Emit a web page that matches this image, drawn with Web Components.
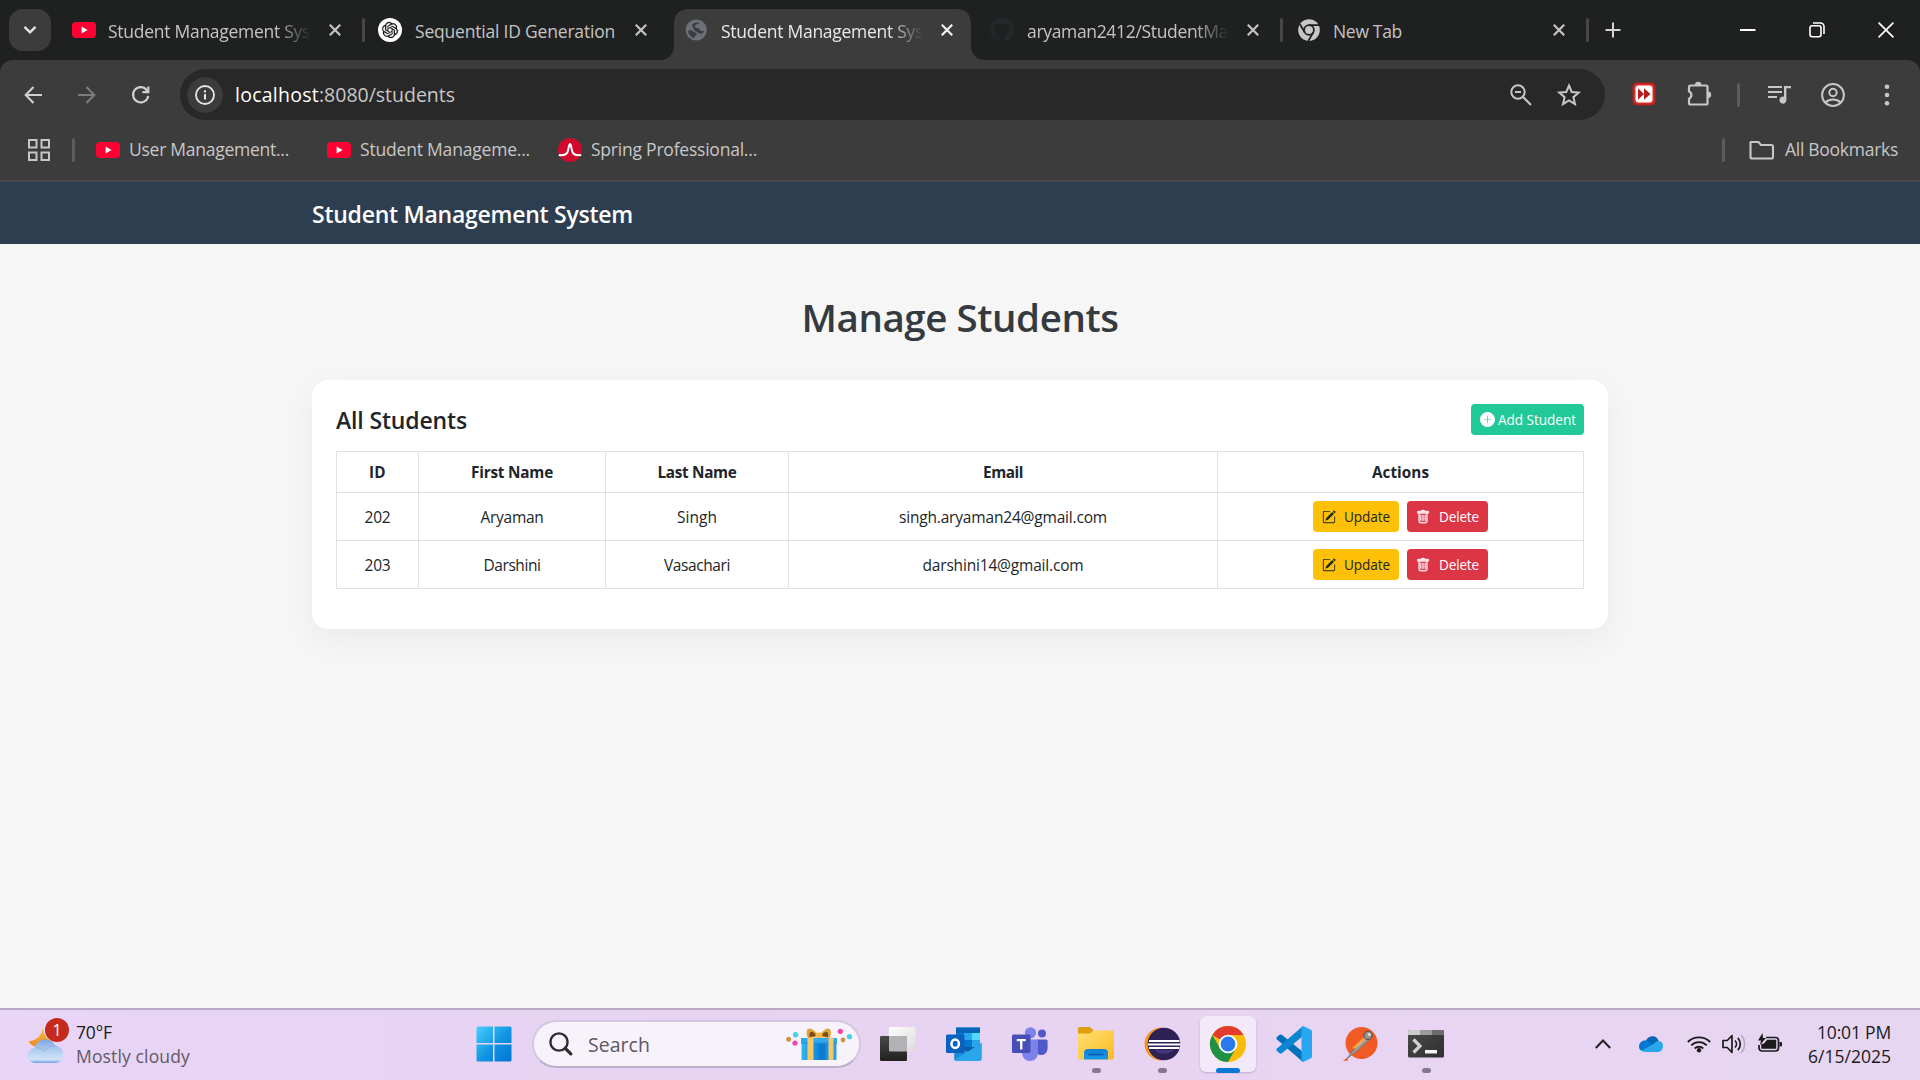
<!DOCTYPE html>
<html lang="en">
<head>
<meta charset="utf-8">
<title>Student Management System</title>
<style>
html,body{margin:0;padding:0}
body{width:1920px;height:1080px;overflow:hidden;background:#f6f6f6;font-family:"Open Sans","Noto Sans",sans-serif}
</style>
</head>
<body>
<desktop-screen></desktop-screen>
<script>
const YT='<rect width="24" height="16" rx="4" fill="#ff0033"/><path d="M9.6 4.6v6.8l6-3.4z" fill="#fff"/>';
const CLOSE='<path d="M.8.8l10.400 10.400M11.200.8L.8 11.200" stroke="currentColor" stroke-width="2.200"/>';
const ICONS={
youtube:[24,16,YT],
close:[12,12,CLOSE],
chevron:[14,10,'<path d="M1.5 1.8L7 7.3l5.5-5.5" fill="none" stroke="#e3e3e3" stroke-width="2.4"/>'],
openai:[24,24,'<circle cx="12" cy="12" r="12" fill="#fff"/><g transform="translate(4 4) scale(.667)"><path fill="#111" stroke="#111" stroke-width=".3" d="M22.2819 9.8211a5.9847 5.9847 0 0 0-.5157-4.9108 6.0462 6.0462 0 0 0-6.5098-2.9A6.0651 6.0651 0 0 0 4.9807 4.1818a5.9847 5.9847 0 0 0-3.9977 2.9 6.0462 6.0462 0 0 0 .7427 7.0966 5.98 5.98 0 0 0 .511 4.9107 6.051 6.051 0 0 0 6.5146 2.9001A5.9847 5.9847 0 0 0 13.2599 24a6.0557 6.0557 0 0 0 5.7718-4.2058 5.9894 5.9894 0 0 0 3.9977-2.9001 6.0557 6.0557 0 0 0-.7475-7.0729zm-9.022 12.6081a4.4755 4.4755 0 0 1-2.8764-1.0408l.1419-.0804 4.7783-2.7582a.7948.7948 0 0 0 .3927-.6813v-6.7369l2.02 1.1686a.071.071 0 0 1 .038.052v5.5826a4.504 4.504 0 0 1-4.4945 4.4944zm-9.6607-4.1254a4.4708 4.4708 0 0 1-.5346-3.0137l.142.0852 4.783 2.7582a.7712.7712 0 0 0 .7806 0l5.8428-3.3685v2.3324a.0804.0804 0 0 1-.0332.0615L9.74 19.9502a4.4992 4.4992 0 0 1-6.1408-1.6464zM2.3408 7.8956a4.485 4.485 0 0 1 2.3655-1.9728V11.6a.7664.7664 0 0 0 .3879.6765l5.8144 3.3543-2.0201 1.1685a.0757.0757 0 0 1-.071 0l-4.8303-2.7865A4.504 4.504 0 0 1 2.3408 7.872zm16.5963 3.8558L13.1038 8.364 15.1192 7.2a.0757.0757 0 0 1 .071 0l4.8303 2.7913a4.4944 4.4944 0 0 1-.6765 8.1042v-5.6772a.79.79 0 0 0-.407-.667zm2.0107-3.0231l-.142-.0852-4.7735-2.7818a.7759.7759 0 0 0-.7854 0L9.409 9.2297V6.8974a.0662.0662 0 0 1 .0284-.0615l4.8303-2.7866a4.4992 4.4992 0 0 1 6.6802 4.66zM8.3065 12.863l-2.02-1.1638a.0804.0804 0 0 1-.038-.0567V6.0742a4.4992 4.4992 0 0 1 7.3757-3.4537l-.142.0805L8.704 5.459a.7948.7948 0 0 0-.3927.6813zm1.0976-2.3654l2.602-1.4998 2.6069 1.4998v2.9994l-2.5974 1.4997-2.6067-1.4997Z"/></g>'],
globe:[24,24,'<circle cx="12.300" cy="12" r="10.600" fill="#6c7078"/><path d="M15.500 4.800c-1.200 1.600-4.200 1.400-4.600 3.400-.2 1.600 1.600 1.500 3 1.900 1.900.6 1.600 2.700 3.400 3h3.200c-.3 1.600-2.200 2.400-4 2.600-2-.2-2.800-1.700-4.500-2.300-1.700-.5-2.500-1.800-2.500-3.600-.9-.6-1.500-1.200-1.500-2.500C8.800 5.100 12 4 15.500 4.800zM4 12.500h3.600c1.400.2 1.500 1.400 2.900 1.800 1.300.4 2.400 1 2.200 2.300-.2 1.200-1.800 1-2 2.300l-.2 1.300C7 19.200 4.300 16.500 4 12.500z" fill="#3c3c3c"/>'],
github:[24,24,'<path transform="scale(1.5)" fill="#22282c" d="M8 0C3.580 0 0 3.580 0 8c0 3.540 2.290 6.530 5.470 7.590.4.07.55-.17.55-.38 0-.19-.01-.82-.01-1.490-2.010.37-2.530-.49-2.690-.94-.09-.23-.48-.94-.82-1.130-.28-.15-.68-.52-.01-.53.63-.01 1.080.58 1.230.82.72 1.210 1.870.87 2.330.66.07-.52.28-.87.51-1.070-1.780-.2-3.640-.89-3.640-3.950 0-.87.31-1.590.82-2.150-.08-.2-.36-1.020.08-2.120 0 0 .67-.21 2.200.82.64-.18 1.320-.27 2-.27s1.360.09 2 .27c1.530-1.040 2.200-.82 2.200-.82.44 1.100.16 1.920.08 2.120.51.56.82 1.270.82 2.150 0 3.070-1.870 3.750-3.650 3.950.29.25.54.73.54 1.480 0 1.070-.01 1.930-.01 2.200 0 .21.15.46.55.38A8.010 8.010 0 0 0 16 8c0-4.420-3.580-8-8-8"/>'],
chromegrey:[24,24,'<circle cx="13" cy="12" r="10.800" fill="#c7c7c7"/><circle cx="13" cy="12" r="4.900" fill="none" stroke="#1f2120" stroke-width="1.800"/><path d="M13 7.100h10M8.800 14.500L3.900 6.100M17.200 14.500l-5 8.600" stroke="#1f2120" stroke-width="1.800"/>'],
plus:[16,16,'<path d="M8 .5v15M.5 8h15" stroke="#d5d5d5" stroke-width="2"/>'],
min:[16,2,'<rect width="15.500" height="2" fill="#fff"/>'],
restore:[16,16,'<rect x="1" y="3.800" width="11" height="11" rx="2.200" fill="none" stroke="#fff" stroke-width="1.600"/><path d="M4 1h7.500A3.500 3.500 0 0 1 15 4.500V12" fill="none" stroke="#fff" stroke-width="1.600"/>'],
winclose:[16,16,'<path d="M.6.6l14.800 14.800M15.400.6L.6 15.400" stroke="#fff" stroke-width="1.700"/>'],
back:[18,18,'<path d="M9.500 1L1.700 9l7.800 8M1.800 9H18" fill="none" stroke="currentColor" stroke-width="2.100"/>'],
fwd:[18,18,'<path d="M8.500 1l7.800 8-7.800 8M16.200 9H0" fill="none" stroke="currentColor" stroke-width="2.100"/>'],
reload:[18,18,'<path d="M16.200 9.800A7.600 7.600 0 1 1 14.600 4L16 5.600" fill="none" stroke="#d0d0d0" stroke-width="2.100"/><path d="M17.400.4V7.200h-7V5.100h4.900V.4z" fill="#d0d0d0"/>'],
info:[36,36,'<circle cx="18" cy="18" r="17.800" fill="#3c3c3c"/><circle cx="18" cy="18" r="9" fill="none" stroke="#e3e3e3" stroke-width="1.900"/><path d="M17 17h2v5.500h-2zM17 13.300h2v2.100h-2z" fill="#e3e3e3"/>'],
zoomout:[22,22,'<circle cx="8" cy="8" r="6.700" fill="none" stroke="#c7c7c7" stroke-width="2"/><path d="M5 8h6M13 13l8 8" stroke="#c7c7c7" stroke-width="2.200"/>'],
star:[24,24,'<path d="M12 2.500l2.700 6.500 7 .6-5.300 4.600 1.600 6.900-6-3.700-6 3.700 1.600-6.900-5.300-4.600 7-.6z" fill="none" stroke="#c7c7c7" stroke-width="2"/>'],
ext:[24,24,'<rect x=".5" y=".5" width="23" height="23" rx="4.500" fill="#b5201c"/><rect x="1.800" y="1.800" width="20.400" height="20.400" rx="3.800" fill="#d62c27"/><rect x="3.500" y="3.500" width="17" height="17" rx="3" fill="#fff"/><path d="M6 6.300l6 5.700-6 5.700zM12 6.300l6.500 5.700-6.500 5.700z" fill="#b3201c"/>'],
puzzle:[26,26,'<path d="M3.500 5.500h15.500a1.500 1.500 0 0 1 1.500 1.500V23a1.500 1.500 0 0 1-1.500 1.500H3.500A1.500 1.500 0 0 1 2 23v-4.300a3.900 3.900 0 0 0 0-7.200V7a1.500 1.500 0 0 1 1.500-1.500z" fill="none" stroke="#c7c7c7" stroke-width="2.200" stroke-linejoin="round"/><path d="M8 5a3.200 3.200 0 0 1 6.400 0zM21 11.600a3.200 3.200 0 0 1 0 6.400z" fill="#c7c7c7"/>'],
media:[24,18,'<path d="M0 1h14M0 6h14M0 11h9" stroke="#c7c7c7" stroke-width="2"/><path d="M16 0h7v2.300h-4.600V14a3.500 3.500 0 1 1-2.400-3.200z" fill="#c7c7c7"/>'],
profile:[24,24,'<circle cx="12" cy="12" r="10.900" fill="none" stroke="#c7c7c7" stroke-width="2"/><circle cx="12" cy="9.500" r="3.700" fill="none" stroke="#c7c7c7" stroke-width="2"/><path d="M4.500 19.500c2-2.200 4.600-3 7.500-3s5.500.8 7.500 3" fill="none" stroke="#c7c7c7" stroke-width="2"/>'],
dots:[6,22,'<circle cx="3" cy="2.800" r="2.300" fill="#c7c7c7"/><circle cx="3" cy="11" r="2.300" fill="#c7c7c7"/><circle cx="3" cy="19.200" r="2.300" fill="#c7c7c7"/>'],
grid:[22,22,'<g fill="none" stroke="#c7c7c7" stroke-width="2"><path d="M1 1h7.500v7.500H1zM13.500 1H21v7.500h-7.500zM1 13.500h7.500V21H1zM13.500 13.500H21V21h-7.500z"/></g>'],
spring:[24,24,'<circle cx="12" cy="12" r="12" fill="#cf0a2c"/><path d="M.8 17c4 .5 7 .2 8.500-2.500C10.800 12 10.600 6 12 6s1.200 6 2.700 8.500C16.200 17.200 19 17.500 23.200 17" fill="none" stroke="#fff" stroke-width="2"/>'],
folder:[26,20,'<path d="M2 2h7.500l2.500 3h10.500a1.500 1.500 0 0 1 1.500 1.500V17a1.500 1.500 0 0 1-1.500 1.500H3A1.500 1.500 0 0 1 1.500 17V2.500z" fill="none" stroke="#c7c7c7" stroke-width="2.100"/>'],
pencil:[16,16,'<path fill="currentColor" d="M15.502 1.940a.5.5 0 0 1 0 .706L14.459 3.690l-2-2L13.502.646a.5.5 0 0 1 .707 0l1.293 1.293zm-1.750 2.456-2-2L4.939 9.210a.5.5 0 0 0-.121.196l-.805 2.414a.25.25 0 0 0 .316.316l2.414-.805a.5.5 0 0 0 .196-.12l6.813-6.814z"/><path fill="currentColor" d="M1 13.500A1.500 1.500 0 0 0 2.500 15h11a1.500 1.500 0 0 0 1.500-1.500v-6a.5.5 0 0 0-1 0v6a.5.5 0 0 1-.5.5h-11a.5.5 0 0 1-.5-.5v-11a.5.5 0 0 1 .5-.5H9a.5.5 0 0 0 0-1H2.500A1.500 1.500 0 0 0 1 2.500z"/>'],
trash:[16,16,'<g fill="currentColor" stroke="currentColor" stroke-width=".35"><path d="M5.500 5.500A.5.5 0 0 1 6 6v6a.5.5 0 0 1-1 0V6a.5.5 0 0 1 .5-.5m2.500 0a.5.5 0 0 1 .5.5v6a.5.5 0 0 1-1 0V6a.5.5 0 0 1 .5-.5m3 .5a.5.5 0 0 0-1 0v6a.5.5 0 0 0 1 0z"/><path d="M14.500 3a1 1 0 0 1-1 1H13v9a2 2 0 0 1-2 2H5a2 2 0 0 1-2-2V4h-.5a1 1 0 0 1-1-1V2a1 1 0 0 1 1-1H6a1 1 0 0 1 1-1h2a1 1 0 0 1 1 1h3.500a1 1 0 0 1 1 1zM4.118 4 4 4.059V13a1 1 0 0 0 1 1h6a1 1 0 0 0 1-1V4.059L11.882 4zM2.500 3h11V2h-11z"/></g><path d="M2 1.800h12v1.500H2z" fill="currentColor" opacity=".75"/>'],
pluscircle:[16,16,'<path fill="currentColor" d="M16 8A8 8 0 1 1 0 8a8 8 0 0 1 16 0M8.350 4.500a.35.5 0 0 0-.7 0v3.150h-3.150a.5.35 0 0 0 0 .7h3.150v3.150a.35.5 0 0 0 .7 0v-3.150h3.150a.5.35 0 0 0 0-.7h-3.150z"/>'],
weather:[37,36,'<defs><linearGradient id="m" x1="0" y1="0" x2="0" y2="1"><stop offset="0" stop-color="#f7c13a"/><stop offset="1" stop-color="#ee8a1d"/></linearGradient><linearGradient id="c" x1="0" y1="0" x2="0" y2="1"><stop offset="0" stop-color="#7fa6e6"/><stop offset=".5" stop-color="#b4d0f1"/><stop offset=".85" stop-color="#cfe3f8"/><stop offset="1" stop-color="#6f9fe8"/></linearGradient></defs><path d="M15 0c-1.500 8.500-5 13-14.500 14.500C3 19 9 21 14 19l9-5c-5-2.500-8-7.500-8-14z" fill="url(#m)"/><path d="M7.500 36a7.500 7.500 0 0 1-.8-15C8 15.500 12 12.500 17 12.500c5 0 8.700 2.500 10.200 6.300A8.700 8.700 0 0 1 28.300 36z" fill="url(#c)"/><path d="M7 21c4.500-.8 7.500.8 9.500 3.300 2-4.500 6-6.500 11.500-5.500" fill="none" stroke="#86ace6" stroke-width="1" opacity=".7"/>'],
windows:[36,36,'<defs><linearGradient id="w" x1="0" y1="0" x2="1" y2="1"><stop offset="0" stop-color="#46d0fb"/><stop offset=".55" stop-color="#1193e2"/><stop offset="1" stop-color="#0074d1"/></linearGradient></defs><path fill="url(#w)" d="M2 .5h15v16.500H.5V2A1.500 1.500 0 0 1 2 .5zM18.500.5h15.500A1.500 1.500 0 0 1 35.500 2v15h-17zM.5 18.500H17v17H2A1.500 1.500 0 0 1 .5 34zM18.500 18.500h17V34a1.500 1.500 0 0 1-1.500 1.500H18.500z"/>'],
search:[24,24,'<circle cx="10" cy="10" r="8.600" fill="none" stroke="#2d2a30" stroke-width="2.400"/><path d="M16.300 16.300l5.500 5.500" stroke="#2d2a30" stroke-width="3.200" stroke-linecap="round"/>'],
gift:[66,34,'<defs><linearGradient id="g" x1="0" y1="0" x2="1" y2="0"><stop offset="0" stop-color="#35b4ee"/><stop offset=".5" stop-color="#0f86da"/><stop offset="1" stop-color="#29a3ea"/></linearGradient></defs><rect x="15.500" y="13" width="35" height="20" rx="1" fill="url(#g)"/><path d="M33.500 14h6v19h-6z" fill="#0b6cc4" opacity=".55"/><path d="M15 11h36v5.500H15z" fill="#2ea9ec"/><path d="M15 15.500h36v1H15z" fill="#0b6cc4" opacity=".5"/><path d="M21.500 11h6v22h-6zM42.500 11h5v22h-5z" fill="#f5c867"/><path d="M33 9C27 .500 22 .300 21 3.500c-1 3 0 5.500 1 7.500l11-1zM33 9C39 .500 43.500.300 44.500 3.500c1 3 0 5.500-1 7.500l-10.500-1z" fill="#dfa33a"/><path d="M31 9c-3-4-6-5-7-3.500s-.5 3-.5 4.500zM35 9c3-4 5.500-5 6.500-3.500s.5 3 .5 4.500z" fill="#7c4d17"/><rect x="29.500" y="5.500" width="7" height="5.500" rx="2" fill="#f3bc52"/><circle cx="2.700" cy="12.300" r="2.500" fill="#c99445"/><circle cx="9.600" cy="7.800" r="2.700" fill="#40d4ee"/><circle cx="9" cy="16" r="2.600" fill="#ea4aa6"/><circle cx="54.300" cy="4.300" r="2.600" fill="#ea4aa6"/><circle cx="57" cy="13" r="2.400" fill="#c99445"/><circle cx="63.500" cy="9.700" r="2.600" fill="#40d4ee"/>'],
taskview:[36,34,'<defs><linearGradient id="t" x1="0" y1="0" x2="0" y2="1"><stop offset="0" stop-color="#4a4a4a"/><stop offset="1" stop-color="#202020"/></linearGradient><linearGradient id="u" x1="0" y1="0" x2="1" y2="1"><stop offset="0" stop-color="#fff"/><stop offset="1" stop-color="#dcdadd"/></linearGradient></defs><rect x="9" width="26.500" height="24.500" rx="1.300" fill="url(#u)"/><rect y="9" width="27" height="25" rx="1.300" fill="url(#t)"/><path d="M9 9h18v15.500H10.300A1.300 1.300 0 0 1 9 23.200z" fill="#b2b1b3"/>'],
outlook:[36,34,'<path d="M10 2a1.500 1.500 0 0 1 1.500-1.500h21A1.500 1.500 0 0 1 34 2v18H10z" fill="#28a8ea"/><path d="M10 .500h24V6H10z" fill="#0364b8"/><path d="M10 6h8v7h-8z" fill="#0a7ad4"/><path d="M18 6h8v7h-8z" fill="#28a8ea"/><path d="M26 6h8v7h-8z" fill="#50d9ff"/><path d="M10 13h8v7h-8z" fill="#0358a7"/><path d="M18 13h8v7h-8z" fill="#0078d4"/><path d="M26 13h8v7h-8z" fill="#28a8ea"/><path d="M10 20h24l-12 5z" fill="#0a5ba6"/><path d="M35.500 16v16a1.800 1.800 0 0 1-1.800 1.800H10a1.800 1.800 0 0 1-1.800-1.800V17l13.500 8z" fill="#1a8ad8"/><path d="M8.500 33L35.500 16v16a1.800 1.800 0 0 1-1.800 1.800H10z" fill="#2ba6ea"/><rect y="7.500" width="18.500" height="18.500" rx="1.500" fill="#0a62be"/><ellipse cx="9.200" cy="16.700" rx="3.700" ry="4.200" fill="none" stroke="#fff" stroke-width="2.500"/>'],
teams:[36,34,'<circle cx="30" cy="6.500" r="4" fill="#5059c9"/><path d="M25 12.500h9a1.600 1.600 0 0 1 1.600 1.600v7.500a6.500 6.500 0 0 1-6.500 6.500c-3 0-5-2-5-5z" fill="#5059c9"/><circle cx="18.500" cy="5.800" r="5.600" fill="#7b83eb"/><path d="M10.500 12.500h14a1.500 1.500 0 0 1 1.500 1.500v11.500c0 5-3.500 8.500-8 8.500s-8-3.500-8-8.500z" fill="#7b83eb"/><rect y="7.500" width="18.500" height="18.500" rx="1.500" fill="#464eb8"/><path d="M4.800 12h8.900v2.200h-3.300v8.300H8.100v-8.300H4.800z" fill="#fff"/>'],
explorer:[36,34,'<defs><linearGradient id="e" x1="0" y1="0" x2="1" y2="1"><stop offset="0" stop-color="#ffdf73"/><stop offset="1" stop-color="#fdbb22"/></linearGradient><linearGradient id="f" x1="0" y1="0" x2="0" y2="1"><stop offset="0" stop-color="#0f7fd6"/><stop offset="1" stop-color="#1a9bea"/></linearGradient></defs><path d="M0 1.500A1.500 1.500 0 0 1 1.500 0H12l3.500 3.500L12 9H0z" fill="#dfa00c"/><path d="M0 6.500h12L15.500 3.500h19A1.500 1.500 0 0 1 36 5v26a1.500 1.500 0 0 1-1.500 1.500h-33A1.500 1.500 0 0 1 0 31z" fill="url(#e)"/><path d="M6 32.500V26a4 4 0 0 1 4-4h16a4 4 0 0 1 4 4v6.500z" fill="url(#f)"/><path d="M10.500 27.500h15" stroke="#0b5fae" stroke-width="1.800"/>'],
eclipse:[37,34,'<path d="M18 .500C8 .500.500 8 .500 17S8 33.500 18 33.500C8 29 5.500 22 5.500 17S8 5 18 .500z" fill="#f7941e"/><circle cx="20" cy="17" r="16.300" fill="#2c2255"/><path d="M5 14h30.500M4 17.500h32.500M5 21h30.500" stroke="#fff" stroke-width="1.900"/><path d="M11 23h18c-2.500 5-15.500 5-18 0z" fill="#42377c"/>'],
chrome:[36,36,'<circle cx="18" cy="18" r="18" fill="#fbbc09"/><path d="M18 18L2.400 9A18 18 0 0 1 33.600 9z" fill="#e33b2e"/><path d="M2.400 9A18 18 0 0 0 18 36l7.800-13.500L10.200 22.500z" fill="#1e9145"/><path d="M18 9h15.600L25.800 22.500z" fill="#fbbc09"/><circle cx="18" cy="18" r="9.300" fill="#fff"/><circle cx="18" cy="18" r="7.400" fill="#2b77ee"/>'],
vscode:[36,36,'<path d="M1 11l2.600-2.200a1.800 1.800 0 0 1 2.200 0L27 26v10L1 13.500a1.600 1.600 0 0 1 0-2.500z" fill="#0072ba"/><path d="M1 25l2.600 2.200a1.800 1.800 0 0 0 2.200 0L27 10V0L1 22.500a1.600 1.600 0 0 0 0 2.500z" fill="#0b86d1"/><path d="M27 36c-1.300-.4-1.500-1-1.500-2V2c0-1 .4-1.600 1.500-2l7.500 3.500A2.200 2.200 0 0 1 36 5.500v25a2.200 2.200 0 0 1-1.500 2z" fill="#27a7f2"/>'],
postman:[35,36,'<circle cx="18.500" cy="17" r="16" fill="#f15a24"/><path d="M9 22L21 11l4 3-12 10z" fill="#f9a13a"/><path d="M24 11.500l2.500 2L13 26 3 33.500l7-9z" fill="#9a9a98" stroke="#666" stroke-width=".6"/><path d="M12.500 22L24 12" stroke="#f4c08c" stroke-width="1"/><circle cx="25" cy="9.500" r="4.200" fill="#8f9192" stroke="#4c4c4c" stroke-width="1"/><circle cx="26.300" cy="8.500" r="1.700" fill="#d8d8d8"/><path d="M0 35l3.500-3 2 2.500z" fill="#f15a24"/>'],
terminal:[36,28,'<defs><clipPath id="k"><rect width="36" height="27.500" rx="1.500"/></clipPath><linearGradient id="q" x1="0" y1="0" x2="1" y2="1"><stop offset="0" stop-color="#4b4b4b"/><stop offset="1" stop-color="#2e2e2e"/></linearGradient></defs><g clip-path="url(#k)"><path d="M0 0h36v28H0z" fill="url(#q)"/><path d="M0 0h12v5H0z" fill="#cdcdcd"/><path d="M12 0h12v5H12z" fill="#9b9b9b"/><path d="M24 0h12v5H24z" fill="#6c6c6c"/></g><path d="M5.500 9.500l6.500 6.500-6.500 6.500" fill="none" stroke="#d2d2d2" stroke-width="3.200"/><rect x="17" y="20" width="12" height="3.500" fill="#f4f4f4"/>'],
caret:[16,10,'<path d="M.8 9L8 1.500 15.200 9" fill="none" stroke="#222" stroke-width="2"/>'],
onedrive:[24,16,'<path d="M7 4.500C8.500 1.500 11 .300 13.500.300c3 0 5.300 1.800 6.200 4.700L15 10 5 8z" fill="#0364b8"/><path d="M0 10.500C0 7 2.700 4.400 6 4.400c1.800 0 3.200.6 4.500 1.600L16 9.500 3 15C1 14 0 12.500 0 10.500z" fill="#0078d4"/><path d="M2.500 14.800L15 7.800c1.300-1.900 2.800-2.800 4.500-2.800 2.700 0 4.500 2.300 4.500 5 0 3.300-2.300 6-5 6H6c-1.500 0-2.500-.5-3.500-1.200z" fill="#28a8ea"/>'],
wifi:[24,18,'<g fill="none" stroke="#1b1b1b" stroke-width="1.800"><path d="M.8 7A16 16 0 0 1 23.200 7M4.300 10.300a11 11 0 0 1 15.400 0M7.700 13.500a6.200 6.200 0 0 1 8.600 0"/></g><circle cx="12" cy="15.300" r="2.200" fill="#1b1b1b"/>'],
volume:[25,20,'<path d="M1 6.500h4.200L10 1.700v16.600l-4.800-4.800H1z" fill="none" stroke="#1b1b1b" stroke-width="1.700" stroke-linejoin="round"/><path d="M13 6.500a5 5 0 0 1 0 7M15.800 3.800a9 9 0 0 1 0 12.400" fill="none" stroke="#1b1b1b" stroke-width="1.700"/><path d="M19 1a13 13 0 0 1 0 18" fill="none" stroke="#b9a8c4" stroke-width="1.600"/>'],
battery:[25,20,'<path d="M8 4.500h9.500a3 3 0 0 1 3 3v7.500a3 3 0 0 1-3 3H4a3 3 0 0 1-3-3v-3" fill="none" stroke="#1b1b1b" stroke-width="1.700"/><path d="M9.500 7.500h8v7.500H4v-3.500h2z" fill="#1b1b1b" stroke="#1b1b1b" stroke-width="1.500"/><path d="M21.500 9h1.500a1 1 0 0 1 1 1v2.500a1 1 0 0 1-1 1h-1.500z" fill="#1b1b1b"/><path d="M4.500 0L0 7.500h3L2 12l6-7H5z" fill="#1b1b1b"/>']
};

class UiIcon extends HTMLElement{
  connectedCallback(){
    if(this.shadowRoot)return;
    const [w,h,body]=ICONS[this.getAttribute('name')];
    const W=this.getAttribute('w')||w,H=this.getAttribute('h')||W*h/w;
    this.attachShadow({mode:'open'}).innerHTML=`<style>:host{display:block;flex:none;width:${W}px;height:${H}px}svg{display:block;overflow:visible}</style><svg width="${W}" height="${H}" viewBox="0 0 ${w} ${h}">${body}</svg>`;
  }
}
customElements.define('ui-icon',UiIcon);

/* One line of text, tracked so that it (or the sample in "ref") takes "w" pixels. */
const pen=document.createElement('canvas').getContext('2d');
class FitText extends HTMLElement{
  connectedCallback(){
    if(this.shadowRoot)return;
    this.attachShadow({mode:'open'}).innerHTML='<style>:host{display:block;flex:none;white-space:nowrap}</style><slot></slot>';
    const s=getComputedStyle(this),t=this.getAttribute('ref')||this.textContent,w=+this.getAttribute('w');
    pen.font=`${s.fontWeight} ${s.fontSize} ${s.fontFamily}`;
    const ls=(w-pen.measureText(t).width)/t.length;
    this.style.letterSpacing=ls.toFixed(3)+'px';
    if(!this.hasAttribute('ref'))this.style.width=w+'px';
  }
}
customElements.define('fit-text',FitText);

class BrowserTab extends HTMLElement{
  connectedCallback(){
    if(this.shadowRoot)return;
    const a=this.hasAttribute('active'),sep=this.hasAttribute('sep');
    this.attachShadow({mode:'open'}).innerHTML=`<style>
    :host{display:flex;position:relative;align-items:center;width:306px;height:60px;flex:none;box-sizing:border-box;padding-left:12px;color:${a?'#e8e8e8':'#c4c4c4'};font-size:17.5px}
    .bg{position:absolute;left:-13px;top:9px;z-index:0}
    .ic{width:24px;display:flex;justify-content:center;position:relative}
    .t{position:relative;width:203px;margin-left:12px;padding-top:1px;overflow:hidden;-webkit-mask-image:linear-gradient(90deg,#000 168px,transparent 203px);mask-image:linear-gradient(90deg,#000 168px,transparent 203px)}
    .t.full{-webkit-mask-image:none;mask-image:none}
    ui-icon.x{position:relative;margin-left:18px}
    .s{width:3px;height:24px;border-radius:1.500px;background:#464746;margin-left:20.500px}
    </style>${a?'<svg class="bg" width="328" height="51"><path fill="#3c3c3c" d="M0 51C10 51 15 45 15 36V15C15 5 21 0 30 0h267c9 0 15 5 15 15v21c0 9 5 15 15 15z"/></svg>':''}
    <div class="ic"><ui-icon name="${this.getAttribute('icon')}"></ui-icon></div>
    <div class="t ${this.hasAttribute('full')?'full':''}"><slot></slot></div><ui-icon class="x" name="close" ${a?'style="color:#f4f4f4"':''}></ui-icon>${sep?'<div class="s"></div>':''}`;
  }
}
customElements.define('browser-tab',BrowserTab);

class BrowserChrome extends HTMLElement{
  connectedCallback(){
    if(this.shadowRoot)return;
    this.attachShadow({mode:'open'}).innerHTML=`<style>
    :host{display:block;height:182px;background:#1f2120;color:#c7c7c7}
    .strip{display:flex;align-items:center;height:60px}
    .drop{display:flex;align-items:center;justify-content:center;width:42px;height:42px;margin:0 9px;border-radius:14px;background:#3c3c3c}
    .bar{height:120px;background:#3c3c3c;border-radius:13px 13px 0 0;border-bottom:2px solid #484848;box-sizing:content-box}
    .row{display:flex;align-items:center;box-sizing:border-box}
    .nav{height:69px}
    .omni{display:flex;align-items:center;width:1425px;height:51px;margin-left:30px;border-radius:26px;background:#282828;box-sizing:border-box;padding-left:7px;font-size:19.500px}
    .sep{width:3px;height:24px;border-radius:2px;background:#5c5c5c;flex:none}
    .marks{height:60px;margin-top:-9px;font-size:17.500px}
    .marks fit-text{margin-top:-2px}
    .sp{flex:1}
    </style>
    <div class="strip"><div class="drop"><ui-icon name="chevron"></ui-icon></div>
    <browser-tab icon="youtube" sep><fit-text ref="Student Management" w="172">Student Management System</fit-text></browser-tab>
    <browser-tab icon="openai" full><fit-text w="200" style="margin-left:1px">Sequential ID Generation</fit-text></browser-tab>
    <browser-tab icon="globe" active><fit-text ref="Student Management" w="172" style="margin-left:1px">Student Management System</fit-text></browser-tab>
    <browser-tab icon="github" sep><fit-text ref="aryaman2412/StudentMa" w="201" style="margin-left:1px">aryaman2412/StudentManagement</fit-text></browser-tab>
    <browser-tab icon="chromegrey" sep full><fit-text w="69" style="margin-left:1px">New Tab</fit-text></browser-tab>
    <ui-icon name="plus" style="margin-left:15px"></ui-icon>
    <ui-icon name="min" style="margin-left:119px"></ui-icon>
    <ui-icon name="restore" style="margin-left:53px"></ui-icon>
    <ui-icon name="winclose" style="margin-left:53px"></ui-icon></div>
    <div class="bar"><div class="row nav">
    <ui-icon name="back" style="margin-left:24px;color:#d0d0d0"></ui-icon><ui-icon name="fwd" style="margin-left:36px;color:#7c7c7c"></ui-icon><ui-icon name="reload" style="margin-left:36px"></ui-icon>
    <div class="omni"><ui-icon name="info"></ui-icon><fit-text w="84" style="margin-left:12px;color:#fff">localhost</fit-text><fit-text w="136">:8080/students</fit-text><div class="sp"></div><ui-icon name="zoomout"></ui-icon><ui-icon name="star" style="margin:0 24px 0 25px"></ui-icon></div>
    <ui-icon name="ext" style="margin:-1px 0 0 27px"></ui-icon><ui-icon name="puzzle" style="margin:-3px 0 0 31px"></ui-icon><div class="sep" style="margin-left:24px"></div><ui-icon name="media" style="margin-left:28px"></ui-icon><ui-icon name="profile" style="margin-left:29px"></ui-icon><ui-icon name="dots" style="margin-left:39px"></ui-icon></div>
    <div class="row marks"><ui-icon name="grid" style="margin-left:28px"></ui-icon><div class="sep" style="margin:0 21px 0 22px"></div>
    <ui-icon name="youtube"></ui-icon><fit-text w="160" style="margin-left:9px">User Management...</fit-text>
    <ui-icon name="youtube" style="margin-left:38px"></ui-icon><fit-text w="170" style="margin-left:9px">Student Manageme...</fit-text>
    <ui-icon name="spring" style="margin-left:28px"></ui-icon><fit-text w="166" style="margin-left:9px">Spring Professional...</fit-text>
    <div class="sp"></div><div class="sep"></div><ui-icon name="folder" style="margin-left:24px"></ui-icon><fit-text w="113" style="margin:-2px 22px 0 10px">All Bookmarks</fit-text></div></div>`;
  }
}
customElements.define('browser-chrome',BrowserChrome);

class ActionButton extends HTMLElement{
  connectedCallback(){
    if(this.shadowRoot)return;
    this.attachShadow({mode:'open'}).innerHTML=`<style>:host{display:flex;align-items:center;box-sizing:border-box;height:31px;border-radius:4px;font-size:13.600px;flex:none}
    :host([kind=add]){width:113px;background:#20c997;color:#fff;padding-left:9px;gap:3px}
    :host([kind=update]){width:86px;background:#ffc107;color:#212529;padding-left:9px;gap:8px}
    :host([kind=delete]){width:81px;background:#dc3545;color:#fff;padding-left:9px;gap:9px}
    </style><ui-icon name="${this.getAttribute('icon')}" w="${this.getAttribute('kind')==='add'?15:14}"></ui-icon><slot></slot>`;
  }
}
customElements.define('action-button',ActionButton);

class StudentTable extends HTMLElement{
  connectedCallback(){
    if(this.shadowRoot)return;
    const rows=[[['202',26],['Aryaman',63],['Singh',40],['singh.aryaman24@gmail.com',208]],[['203',26],['Darshini',57],['Vasachari',66],['darshini14@gmail.com',161]]];
    const head=[['ID',17],['First Name',82],['Last Name',79],['Email',40],['Actions',57]];
    const cell=([t,w])=>`<div class="c"><fit-text w="${w}">${t}</fit-text></div>`;
    this.attachShadow({mode:'open'}).innerHTML=`<style>
    :host{display:block;border:solid #dee2e6;border-width:1px 0 0 1px;font-size:15.500px;color:#212529}
    .r{display:grid;grid-template-columns:82px 187px 183px 429px 1fr;height:48px}
    .h{height:41px;font-weight:700;font-size:15.300px}
    .c{display:flex;align-items:center;justify-content:center;gap:8px;border:solid #dee2e6;border-width:0 1px 1px 0}
    .c>fit-text{padding-top:1px}
    .h .c>fit-text{padding-top:0}
    </style><div class="r h">${head.map(cell).join('')}</div>${rows.map(r=>`<div class="r">${r.map(cell).join('')}<div class="c"><action-button kind="update" icon="pencil"><fit-text w="46">Update</fit-text></action-button><action-button kind="delete" icon="trash"><fit-text w="40">Delete</fit-text></action-button></div></div>`).join('')}`;
  }
}
customElements.define('student-table',StudentTable);

class StudentPage extends HTMLElement{
  connectedCallback(){
    if(this.shadowRoot)return;
    this.attachShadow({mode:'open'}).innerHTML=`<style>
    :host{display:block;height:826px;background:#f6f6f6}
    header{display:flex;align-items:center;box-sizing:border-box;height:62px;padding:2px 0 0 312px;background:#2c3e50;color:#fff;font-weight:600;font-size:23px}
    h1{display:flex;justify-content:center;margin:46px 0 36px;height:54px;line-height:54px;font-size:38.500px;font-weight:600;color:#343a40}
    section{width:1296px;height:249px;box-sizing:border-box;margin:0 auto;padding:24px;border-radius:16px;background:#fff;box-shadow:0 10px 30px rgba(0,0,0,.05)}
    .top{display:flex;align-items:center;justify-content:space-between;height:31px;margin-bottom:16px;font-size:23px;font-weight:600;color:#212529}
    .top action-button{font-weight:400}
    </style><header><fit-text w="321">Student Management System</fit-text></header>
    <h1><fit-text w="317">Manage Students</fit-text></h1>
    <section><div class="top"><fit-text w="131">All Students</fit-text><action-button kind="add" icon="pluscircle"><fit-text w="78">Add Student</fit-text></action-button></div><student-table></student-table></section>`;
  }
}
customElements.define('student-page',StudentPage);

class TaskApp extends HTMLElement{
  connectedCallback(){
    if(this.shadowRoot)return;
    this.attachShadow({mode:'open'}).innerHTML=`<style>
    :host{display:flex;position:relative;align-items:center;justify-content:center;box-sizing:border-box;width:56px;height:56px;flex:none;border-radius:6px}
    :host([active]){background:#f3e9f9;box-shadow:0 1px 2px rgba(120,90,140,.35)}
    i{position:absolute;bottom:-1px;left:50%;width:9px;height:5px;margin-left:-4.500px;border-radius:3px;background:#857790}
    :host([active]) i{width:24px;margin-left:-12px;background:#0a78d4}
    </style><ui-icon name="${this.getAttribute('icon')}"></ui-icon>${this.hasAttribute('open')?'<i></i>':''}`;
  }
}
customElements.define('task-app',TaskApp);

class TaskBar extends HTMLElement{
  connectedCallback(){
    if(this.shadowRoot)return;
    this.attachShadow({mode:'open'}).innerHTML=`<style>
    :host{display:flex;align-items:center;box-sizing:border-box;height:72px;padding-bottom:2px;border-top:2px solid #b8a9c4;background:linear-gradient(90deg,#e8d5f7,#e7d3f1 40%,#e8d4f3 75%,#e6d6f1);color:#1b1b1b;font-size:17.500px}
    .wx{position:relative;width:48px;height:50px;margin-left:28px;flex:none}
    .wx ui-icon{margin:8px 0 0 0}
    .badge{position:absolute;left:17px;top:-1px;width:24px;height:24px;border-radius:12px;background:#c42b1c;color:#fff;font-size:16px;line-height:24px;text-align:center}
    .two{display:flex;flex-direction:column;line-height:24px;height:49px}
    .two.r{align-items:flex-end}
    .find{display:flex;align-items:center;box-sizing:border-box;width:329px;height:48px;margin:0 15px 0 20px;padding-left:15px;border:2px solid #d6c6e0;border-bottom-color:#bfafc9;border-radius:24px;background:#f8f2fb;font-size:19.500px;color:#5c5861}
    .apps{display:flex;gap:10px;align-items:center;margin-left:-6px}
    .sp{flex:1}
    </style>
    <div class="wx"><ui-icon name="weather"></ui-icon><div class="badge">1</div></div>
    <div class="two"><fit-text w="36">70°F</fit-text><fit-text w="114" style="color:#615a68">Mostly cloudy</fit-text></div>
    <ui-icon name="windows" style="margin-left:286px"></ui-icon>
    <div class="find"><ui-icon name="search"></ui-icon><fit-text w="62" style="margin-left:15px">Search</fit-text><ui-icon name="gift" style="margin-left:136px"></ui-icon></div>
    <div class="apps"><task-app icon="taskview"></task-app><task-app icon="outlook"></task-app><task-app icon="teams"></task-app><task-app icon="explorer" open></task-app><task-app icon="eclipse" open></task-app><task-app icon="chrome" open active></task-app><task-app icon="vscode"></task-app><task-app icon="postman"></task-app><task-app icon="terminal" open></task-app></div>
    <div class="sp"></div>
    <ui-icon name="caret"></ui-icon><ui-icon name="onedrive" style="margin-left:28px"></ui-icon><ui-icon name="wifi" style="margin-left:24px"></ui-icon><ui-icon name="volume" style="margin-left:11px"></ui-icon><ui-icon name="battery" style="margin:-3px 25px 0 11px"></ui-icon>
    <div class="two r" style="margin-right:29px"><fit-text w="74">10:01 PM</fit-text><fit-text w="83">6/15/2025</fit-text></div>`;
  }
}
customElements.define('task-bar',TaskBar);

class DesktopScreen extends HTMLElement{
  connectedCallback(){
    if(this.shadowRoot)return;
    this.attachShadow({mode:'open'}).innerHTML='<style>:host{display:flex;flex-direction:column;width:1920px;height:1080px;overflow:hidden}</style><browser-chrome></browser-chrome><student-page></student-page><task-bar></task-bar>';
  }
}
customElements.define('desktop-screen',DesktopScreen);
</script>
</body>
</html>
